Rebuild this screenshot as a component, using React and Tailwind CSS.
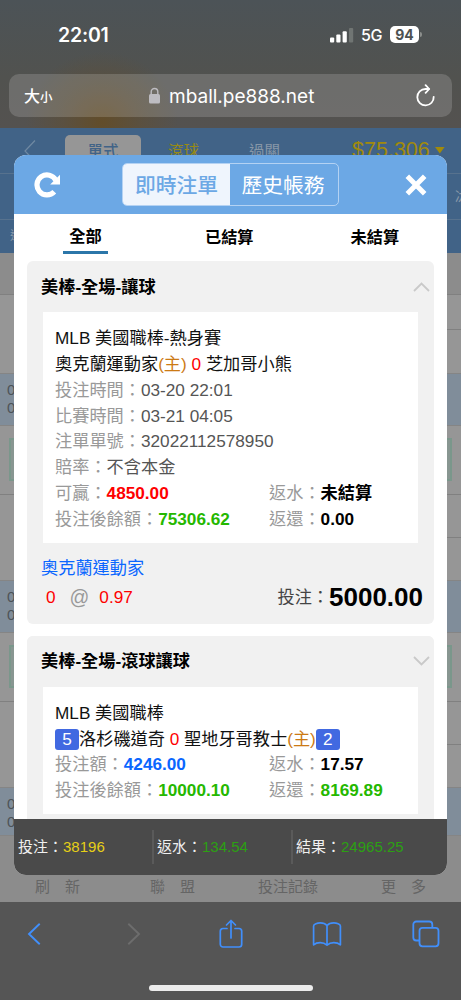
import React from "react";

const pageRows = [
    { id: 1, rowHeight: "h-[79px]", cellHeight: "h-[35px]", blueHeight: "h-[53px]" },
    { id: 2, rowHeight: "h-[86px]", cellHeight: "h-[43px]", blueHeight: "h-[53px]" },
    { id: 3, rowHeight: "h-[86px]", cellHeight: "h-[43px]", blueHeight: "h-[49px]" },
];

const tickets = [
    {
        title: "美棒-全場-讓球",
        open: true,
        league: "MLB 美國職棒-熱身賽",
        match: (
            <>
                奧克蘭運動家<span className="text-[#cc7a14]">(主)</span> <span className="text-[#fe0000]">0</span> 芝加哥小熊
            </>
        ),
        info: [
            ["投注時間", "03-20 22:01"],
            ["比賽時間", "03-21 04:05"],
            ["注單單號", "32022112578950"],
            ["賠率", "不含本金"],
        ],
        money: [
            ["可贏", "4850.00", "text-[#fe0000]", "返水", "未結算", "text-black"],
            ["投注後餘額", "75306.62", "text-[#25b800]", "返還", "0.00", "text-black"],
        ],
        bet: { team: "奧克蘭運動家", line: "0", odds: "0.97", amount: "5000.00" },
    },
    {
        title: "美棒-全場-滾球讓球",
        open: false,
        league: "MLB 美國職棒",
        match: (
            <>
                <Score>5</Score>洛杉磯道奇 <span className="text-[#fe0000]">0</span> 聖地牙哥教士
                <span className="text-[#cc7a14]">(主)</span>
                <Score>2</Score>
            </>
        ),
        info: [],
        money: [
            ["投注額", "4246.00", "text-[#0a66ff]", "返水", "17.57", "text-black"],
            ["投注後餘額", "10000.10", "text-[#25b800]", "返還", "8169.89", "text-[#25b800]"],
        ],
    },
];

function Score({ children }) {
    return (
        <span className="inline-block w-6 h-[21px] leading-[21px] rounded-[3px] bg-[#4169e1] text-white text-center">
            {children}
        </span>
    );
}

function StatusBar() {
    return (
        <div className="h-[74px] pt-[22px] pl-[58px] pr-[39px] flex items-start justify-between text-white font-['Inter',sans-serif]">
            <span className="text-[19.5px] leading-[26px] font-semibold tracking-[-0.2px]">22:01</span>
            <div className="flex items-center h-[25px]">
                <svg width="24" height="16" viewBox="0 0 24 16" fill="#fff">
                    <rect x="0" y="10.5" width="4.2" height="5" rx="1" />
                    <rect x="6.3" y="7.5" width="4.2" height="8" rx="1" />
                    <rect x="12.6" y="4.2" width="4.2" height="11.3" rx="1" />
                    <rect x="19" y="1" width="4.2" height="14.5" rx="1" fill="#707573" />
                </svg>
                <span className="ml-[7px] w-[22px] text-[16px] font-medium tracking-tight">5G</span>
                <span className="ml-[7px] w-[29px] h-[17px] rounded-[5px] bg-white text-[#4d5251] text-[14px] leading-[17px] font-bold text-center">94</span>
                <span className="ml-px w-[2px] h-[5px] rounded-r-full bg-[#8b8e8c]"></span>
            </div>
        </div>
    );
}

function AddressBar() {
    return (
        <div className="mx-[9px] h-[43px] rounded-[10px] bg-white/16 flex items-center text-white">
            <div className="w-[139px] pl-[15px] pt-0.5 flex items-baseline font-medium">
                <span className="text-[16px]">大</span>
                <span className="text-[12.5px]">小</span>
            </div>
            <svg width="13" height="18" viewBox="0 0 13 18">
                <rect x="1" y="7" width="11" height="9.5" rx="1.6" fill="#bdbcc1" />
                <path d="M3.2 8V4.8a3.3 3.3 0 0 1 6.6 0V8" fill="none" stroke="#bdbcc1" strokeWidth="1.4" />
            </svg>
            <span className="ml-2 pt-[3px] w-[246px] text-[19px] leading-6 font-['Inter',sans-serif]">mball.pe888.net</span>
            <svg width="22" height="24" viewBox="0 0 22 24" fill="none" stroke="#fff" strokeWidth="1.8" strokeLinecap="round" strokeLinejoin="round">
                <path d="M18.7 12.8A8.2 8.2 0 1 1 10.5 5h3.3" />
                <path d="M10.6 1.2 14.2 5l-3.6 3.8" />
            </svg>
        </div>
    );
}

function PageBehind() {
    return (
        <div className="h-full flex flex-col bg-[#8c8c8c]">
            <div className="h-[45px] flex items-start bg-[#416387] text-[15.5px] leading-5">
                <svg className="ml-6 mt-3" width="12" height="22" viewBox="0 0 12 22" fill="none" stroke="#7089a2" strokeWidth="1.2">
                    <path d="M11 0.5 1 11l10 10.5" />
                </svg>
                <div className="ml-[29px] mt-[7px] w-[76px] h-9 pt-[7px] rounded-[5px] bg-[#969696] text-[#416387] text-center font-medium">單式</div>
                <span className="ml-[27px] mt-[14px] text-[#978a16]">滾球</span>
                <span className="ml-[50px] mt-[14px] text-[#8797a7]">過關</span>
                <span className="ml-[72px] mt-[10px] text-[21.5px] leading-6 text-[#a18a0b]">$75,306</span>
                <svg className="ml-[5px] mt-[19px]" width="10" height="7" viewBox="0 0 10 7">
                    <path d="M0 0h9.6L4.8 6.5z" fill="#a18a0b" />
                </svg>
            </div>
            <div className="h-[46px] border-t border-[#57728e] bg-[#416387] text-right text-[15px] leading-[46px] text-[#8797a7] overflow-hidden">
                <span className="mr-[-9px]">冰</span>
            </div>
            <div className="h-[34px] border-t border-[#57728e] bg-[#416387] pl-2.5 text-[12px] leading-[32px] text-[#8797a7]">進</div>
            <div className="h-[41px] bg-[#8c8c8c]"></div>
            {pageRows.map((row, index) => (
                <div key={row.id}>
                    <div className={`${row.rowHeight} flex border-t border-[#808080] bg-[#969696]`}>
                        <div className="flex-1"></div>
                        <div className="w-10">
                            <div className={`${row.cellHeight} border-b border-[#808080]`}></div>
                        </div>
                    </div>
                    <div className={`${row.blueHeight} bg-[#808d9a] border-y border-[#858585] pl-[7px] pt-[7px] text-[15px] leading-[17.5px] text-[#4d5357]`}>
                        <div>03-21</div>
                        <div>04:05</div>
                    </div>
                    {index < 2 && (
                        <div className="h-[68px] px-[9px] pt-3 bg-[#969696]">
                            <div className="h-[43px] border-2 border-[#7a978b] bg-[#889691]"></div>
                        </div>
                    )}
                </div>
            ))}
        </div>
    );
}

function BottomMenu() {
    return (
        <div className="h-[31px] flex items-center bg-[#8c8c8c] text-[15px] text-[#656565] leading-8">
            <span className="ml-[35px] w-[115px]">刷　新</span>
            <span className="w-[108px]">聯　盟</span>
            <span className="w-[123px]">投注記錄</span>
            <span>更　多</span>
        </div>
    );
}

function Ticket({ ticket }) {
    return (
        <div className="rounded-[6px] bg-[#f1f1f1] text-[17.2px] leading-[25.85px]">
            <div className="h-[51px] flex items-center justify-between pl-[14px] pr-1">
                <h3 className="pt-0.5 font-bold text-black">{ticket.title}</h3>
                <svg className={ticket.open ? "" : "rotate-180"} width="17" height="10" viewBox="0 0 17 10" fill="none" stroke="#c9c9c9" strokeWidth="1.8">
                    <path d="M1 9l7.5-7.5L16 9" />
                </svg>
            </div>
            <div className="mx-4 bg-white pl-3 pt-[14px] pb-[10px] text-[#111]">
                <p>{ticket.league}</p>
                <p className="whitespace-nowrap">{ticket.match}</p>
                {ticket.info.map(([label, value]) => (
                    <p key={label} className="text-[#555]">
                        <span className="text-[#999]">{label}：</span>{value}
                    </p>
                ))}
                {ticket.money.map(([label, value, color, label2, value2, color2]) => (
                    <div key={label} className="flex text-[#999]">
                        <p className="w-[214px]">
                            {label}：<b className={color}>{value}</b>
                        </p>
                        <p>
                            {label2}：<b className={color2}>{value2}</b>
                        </p>
                    </div>
                ))}
            </div>
            {ticket.bet && (
                <div className="h-[81px] pl-[14px] pr-[11px] pt-[13px]">
                    <p className="text-[#0a66ff]">{ticket.bet.team}</p>
                    <div className="flex items-center h-[32px] text-[#fe0000]">
                        <span className="ml-[5px]">{ticket.bet.line}</span>
                        <span className="ml-[14px] text-[19.5px] text-[#999]">@</span>
                        <span className="ml-[10px]">{ticket.bet.odds}</span>
                        <span className="ml-auto text-[#444]">投注：</span>
                        <b className="text-[26px] text-black">{ticket.bet.amount}</b>
                    </div>
                </div>
            )}
        </div>
    );
}

function BetModal() {
    return (
        <div className="absolute left-[14px] top-[27px] w-[433px] h-[720px] rounded-xl overflow-hidden bg-white flex flex-col">
            <div className="h-[59px] shrink-0 flex items-center justify-between pl-5 pr-5 bg-[#6ca8e5]">
                <svg width="27" height="28" viewBox="0 0 27 28">
                    <path d="M21.8 9.2A10 10 0 1 0 20.3 20.8" fill="none" stroke="#fff" strokeWidth="5.2" />
                    <path d="M26 3.8v9.7h-9.8z" fill="#fff" />
                </svg>
                <div className="ml-[54px] w-[217px] h-[43px] flex rounded-[5px] border border-[#b4d2f3] overflow-hidden text-[20.8px] leading-[44px] text-center">
                    <span className="w-[107px] bg-[#eff5fd] text-[#6ca8e5] font-medium">即時注單</span>
                    <span className="flex-1 pr-0.5 text-white">歷史帳務</span>
                </div>
                <svg className="ml-[59px]" width="22" height="22" viewBox="0 0 22 22" stroke="#fff" strokeWidth="5">
                    <path d="M2.3 2.3l17.4 17.4M19.7 2.3 2.3 19.7" />
                </svg>
            </div>
            <div className="h-[47px] shrink-0 flex text-[16.2px] leading-6 font-bold text-black">
                <div className="ml-[49px] mt-[9px] h-[31px] w-[45px] pt-px text-center border-b-3 border-[#2b76a9]">全部</div>
                <span className="ml-[97px] mt-[11px]">已結算</span>
                <span className="ml-[97px] mt-[11px]">未結算</span>
            </div>
            <div className="flex-1 min-h-0 overflow-hidden px-[13px] flex flex-col gap-3">
                {tickets.map((ticket) => (
                    <div key={ticket.title} className="shrink-0 last:pb-5 last:rounded-t-[6px] last:bg-[#f1f1f1]">
                        <Ticket ticket={ticket} />
                    </div>
                ))}
            </div>
            <div className="h-[56px] shrink-0 flex items-center bg-[#4a4a4a] text-[15px] text-[#f0f0f0]">
                <p className="w-[138px] h-[34px] leading-[34px] pl-1">投注：<span className="text-[#e6cf17]">38196</span></p>
                <p className="w-[139px] h-[34px] leading-[34px] pl-[3px] border-l-2 border-[#5a5a5a]">返水：<span className="text-[#2ca012]">134.54</span></p>
                <p className="h-[34px] leading-[34px] pl-[3px] border-l-2 border-[#5a5a5a]">結果：<span className="text-[#2ca012]">24965.25</span></p>
            </div>
        </div>
    );
}

function SafariToolbar() {
    return (
        <div className="h-[98px] bg-[#555] flex flex-col items-center justify-between pb-[9px]">
            <div className="w-full h-[64px] pl-[27px] pr-[21px] flex items-center justify-between text-[#418ffb]">
                <svg width="14" height="22" viewBox="0 0 14 22" fill="none" stroke="currentColor" strokeWidth="1.9">
                    <path d="M12.7 0.8 2 11l10.7 10.2" />
                </svg>
                <svg className="ml-[16px]" width="14" height="22" viewBox="0 0 14 22" fill="none" stroke="#6d6d6d" strokeWidth="1.9">
                    <path d="M1.3 0.8 12 11 1.3 21.2" />
                </svg>
                <svg className="ml-[8px]" width="24" height="30" viewBox="0 0 24 30" fill="none" stroke="currentColor" strokeWidth="1.7" strokeLinecap="round" strokeLinejoin="round">
                    <path d="M8 9.5H4a2.7 2.7 0 0 0-2.7 2.7v13.1A2.7 2.7 0 0 0 4 28h16a2.7 2.7 0 0 0 2.7-2.7V12.2A2.7 2.7 0 0 0 20 9.5h-4" />
                    <path d="M12 19V1.8M7.5 6 12 1.5 16.5 6" />
                </svg>
                <svg width="30" height="26" viewBox="0 0 30 26" fill="none" stroke="currentColor" strokeWidth="1.7" strokeLinejoin="round">
                    <path d="M15 4.5C13.5 2.7 11 1.9 8.2 1.9 5.5 1.9 1.6 3 1.6 5v18.8c2-1.7 4.3-2.2 6.6-2.2 2.7 0 5 .9 6.8 2.5 1.8-1.6 4.1-2.5 6.8-2.5 2.3 0 4.6.5 6.6 2.2V5c0-2-3.9-3.1-6.6-3.1-2.8 0-5.3.8-6.8 2.6zM15 4.5v19" />
                </svg>
                <svg width="28" height="28" viewBox="0 0 28 28" fill="none" stroke="currentColor" strokeWidth="1.8">
                    <rect x="7.5" y="7.8" width="19" height="18.5" rx="3" />
                    <path d="M7.5 20.5H4.3a3 3 0 0 1-3-3V4.5a3 3 0 0 1 3-3h13a3 3 0 0 1 3 3v3.3" />
                </svg>
            </div>
            <div className="w-[164px] h-[6px] rounded-full bg-[#ececec]"></div>
        </div>
    );
}

function App() {
    return (
        <div className="w-[461px] h-[1000px] overflow-hidden flex flex-col font-['Liberation_Sans','Noto_Sans_CJK_TC',sans-serif]">
            <header className="h-[128px] bg-[radial-gradient(ellipse_76px_70px_at_102px_122px,#624d2a_0%,#5f4f3599_50%,#624d2a00_100%),linear-gradient(#4c5357,#51524f_60%,#545250)]">
                <StatusBar />
                <AddressBar />
            </header>
            <main className="relative h-[774px] flex flex-col">
                <div className="h-[743px] overflow-hidden">
                    <PageBehind />
                </div>
                <BottomMenu />
                <BetModal />
            </main>
            <SafariToolbar />
        </div>
    );
}

export default App;
